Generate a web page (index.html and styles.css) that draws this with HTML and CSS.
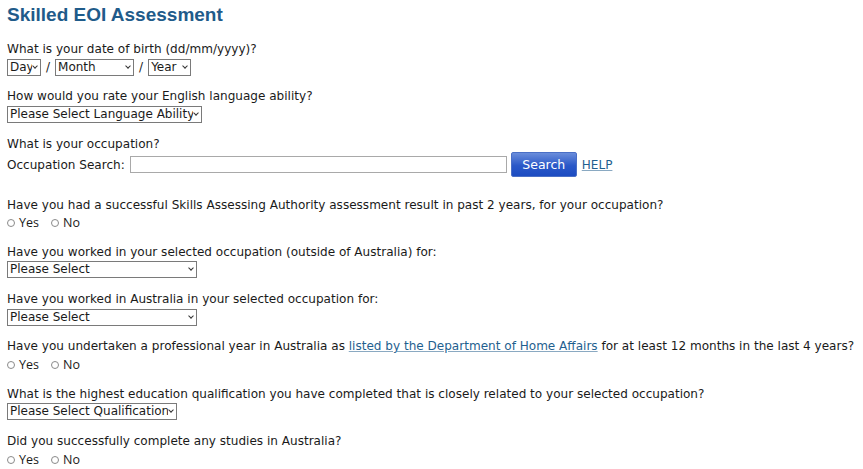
FILE: index.html
```html
<!DOCTYPE html>
<html lang="en">
<head>
<meta charset="utf-8">
<title>Skilled EOI Assessment</title>
<link rel="stylesheet" href="styles.css">
</head>
<body>
<div class="page">
  <h1 class="title">Skilled EOI Assessment</h1>

  <div class="q">
    <div class="label">What is your date of birth (dd/mm/yyyy)?</div>
    <div class="row">
      <span class="sel w-day"><select><option>Day</option></select></span>
      <span class="slash">/</span>
      <span class="sel w-month"><select><option>Month</option></select></span>
      <span class="slash">/</span>
      <span class="sel w-year"><select><option>Year</option></select></span>
    </div>
  </div>

  <div class="q">
    <div class="label">How would you rate your English language ability?</div>
    <div class="row">
      <span class="sel w-lang"><select><option>Please Select Language Ability</option></select></span>
    </div>
  </div>

  <div class="q q-occ">
    <div class="label">What is your occupation?</div>
    <div class="row occ-row">
      <span class="occ-label">Occupation Search:</span>
      <input class="occ-input" type="text">
      <button class="btn">Search</button>
      <a class="link help" href="#">HELP</a>
    </div>
  </div>

  <div class="q">
    <div class="label">Have you had a successful Skills Assessing Authority assessment result in past 2 years, for your occupation?</div>
    <div class="row radios">
      <span class="radio"><span class="dot"></span>Yes</span>
      <span class="radio"><span class="dot"></span>No</span>
    </div>
  </div>

  <div class="q">
    <div class="label">Have you worked in your selected occupation (outside of Australia) for:</div>
    <div class="row">
      <span class="sel w-ps"><select><option>Please Select</option></select></span>
    </div>
  </div>

  <div class="q">
    <div class="label">Have you worked in Australia in your selected occupation for:</div>
    <div class="row">
      <span class="sel w-ps"><select><option>Please Select</option></select></span>
    </div>
  </div>

  <div class="q">
    <div class="label">Have you undertaken a professional year in Australia as <a class="link" href="#">listed by the Department of Home Affairs</a> for at least 12 months in the last 4 years?</div>
    <div class="row radios">
      <span class="radio"><span class="dot"></span>Yes</span>
      <span class="radio"><span class="dot"></span>No</span>
    </div>
  </div>

  <div class="q">
    <div class="label">What is the highest education qualification you have completed that is closely related to your selected occupation?</div>
    <div class="row">
      <span class="sel w-qual"><select><option>Please Select Qualification</option></select></span>
    </div>
  </div>

  <div class="q">
    <div class="label">Did you successfully complete any studies in Australia?</div>
    <div class="row radios">
      <span class="radio"><span class="dot"></span>Yes</span>
      <span class="radio"><span class="dot"></span>No</span>
    </div>
  </div>
</div>
</body>
</html>
```
FILE: styles.css
```css
html, body {
  margin: 0;
  padding: 0;
  background: #ffffff;
}
body {
  font-family: "DejaVu Sans", Verdana, sans-serif;
  font-size: 12.05px;
  color: #1a1a1a;
}
.page {
  padding: 4px 7px 0 7px;
  display: flex;
  flex-direction: column;
}
.title {
  margin: 0 0 14px 0;
  font-family: "Liberation Sans", Arial, sans-serif;
  font-size: 19px;
  font-weight: bold;
  color: #1f5b8a;
  line-height: 22px;
}
.q {
  display: flex;
  flex-direction: column;
  margin-bottom: 11.3px;
}
.label {
  line-height: 18px;
  height: 18px;
  white-space: nowrap;
}
.row {
  display: flex;
  align-items: center;
  height: 18px;
}
.slash {
  margin: 0 5px;
}
.sel {
  position: relative;
  display: inline-flex;
  height: 17px;
  box-sizing: border-box;
}
.sel select {
  appearance: none;
  -webkit-appearance: none;
  font-family: "DejaVu Sans", Verdana, sans-serif;
  font-size: 12px;
  color: #1a1a1a;
  background: #ffffff;
  border: 1px solid #7a7a7a;
  border-radius: 0;
  height: 17px;
  width: 100%;
  padding: 0 8px 0 2px;
  margin: 0;
  line-height: 15px;
}
.sel::after {
  content: "";
  position: absolute;
  right: 4px;
  top: 5px;
  width: 3px;
  height: 3px;
  border-right: 1px solid #333;
  border-bottom: 1px solid #333;
  transform: rotate(45deg);
  pointer-events: none;
}
.w-day { width: 34px; }
.w-month { width: 79px; }
.w-year { width: 43px; }
.w-lang { width: 195px; }
.w-ps { width: 190px; }
.w-qual { width: 170px; }

.q-occ {
  margin-bottom: 19px;
}
.occ-row {
  height: 24px;
}
.occ-label {
  margin-right: 5px;
}
.occ-input {
  width: 377px;
  height: 17px;
  box-sizing: border-box;
  border: 1px solid #a9a9a9;
  margin: 0;
  padding: 0;
}
.btn {
  margin-left: 4px;
  width: 66px;
  height: 25px;
  border: 1px solid #4a6fc6;
  border-radius: 2px;
  background: linear-gradient(#6a8ddb, #2a58c8 55%, #1c4cc2);
  color: #ffffff;
  font-family: "DejaVu Sans", Verdana, sans-serif;
  font-size: 12.5px;
  padding: 0;
}
.help {
  margin-left: 5px;
}
.link {
  color: #1f5f8f;
  text-decoration: underline;
  text-decoration-color: #8aa9c2;
}
.radios {
  gap: 12px;
}
.radio {
  display: inline-flex;
  align-items: center;
  font-family: "Open Sans", "Noto Sans", sans-serif;
  font-size: 12.5px;
  color: #1a1a1a;
}
.dot {
  width: 6px;
  height: 6px;
  border: 1px solid #8a8a8a;
  border-radius: 50%;
  margin-left: 0;
  margin-right: 4px;
  margin-top: 1px;
}
```
